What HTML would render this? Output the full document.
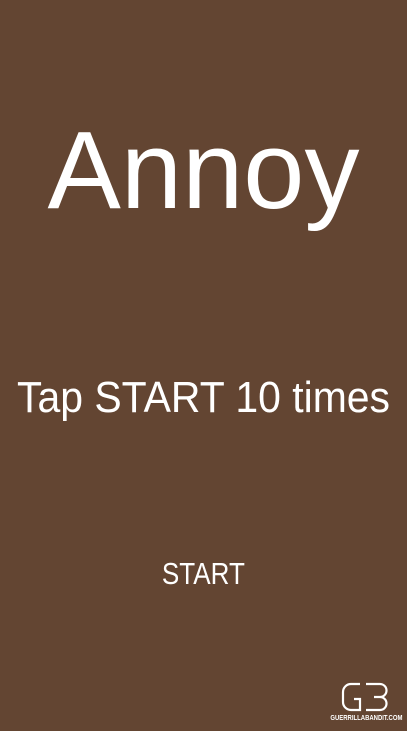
<!DOCTYPE html>
<html><head><style>
body{margin:0;width:407px;height:731px;background:#634532;overflow:hidden;position:relative;font-family:"Liberation Sans",sans-serif;color:#fff}
.t{position:absolute;left:0;width:407px;text-align:center;white-space:nowrap;line-height:1}
.t span{display:inline-block}
</style></head><body>
<div class="t" style="top:116px;font-size:110px"><span style="transform:scaleX(1.0)">Annoy</span></div>
<div class="t" style="top:376px;font-size:44px"><span style="transform:scaleX(0.93)">Tap START 10 times</span></div>
<div class="t" style="top:558px;font-size:31px"><span style="transform:scaleX(0.84)">START</span></div>
<svg style="position:absolute;left:340px;top:681px" width="52" height="32" viewBox="0 0 52 32" fill="none" stroke="#fff" stroke-width="2.2">
<path d="M20 3H11a8 8 0 0 0-8 8v10a8 8 0 0 0 8 8h9V18h-6"/>
<path d="M26 3h14a6 6 0 0 1 0 13h-6h6a6.5 6.5 0 0 1 0 13H26"/>
</svg>
<div style="position:absolute;left:320px;top:715px;width:93px;text-align:center;font-size:7px;font-weight:bold;color:#fff;white-space:nowrap"><span style="display:inline-block;transform:scaleX(0.85)">GUERRILLABANDIT.COM</span></div>
</body></html>
